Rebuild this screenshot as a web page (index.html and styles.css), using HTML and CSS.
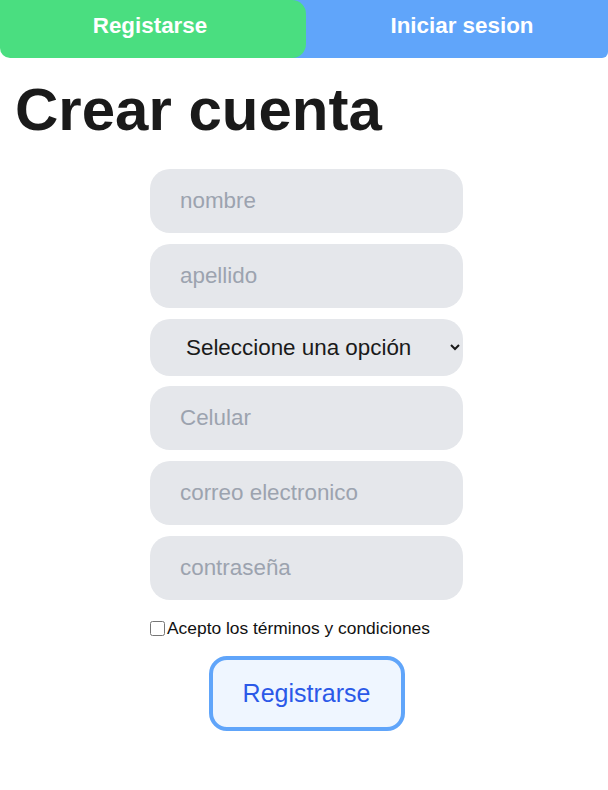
FILE: index.html
```html
<!DOCTYPE html>
<html lang="es">
<head>
<meta charset="utf-8">
<link rel="stylesheet" href="styles.css">
<title>Crear cuenta</title>
</head>
<body>
<div class="tabs">
  <button class="tab tab-register">Registarse</button>
  <button class="tab tab-login">Iniciar sesion</button>
</div>
<h1 class="title">Crear cuenta</h1>
<form class="form">
  <input class="field" type="text" placeholder="nombre">
  <input class="field" type="text" placeholder="apellido">
  <select class="field select">
    <option>Seleccione una opción</option>
  </select>
  <input class="field" type="text" placeholder="Celular">
  <input class="field" type="email" placeholder="correo electronico">
  <input class="field" type="password" placeholder="contraseña">
  <label class="terms"><input class="check" type="checkbox">Acepto los términos y condiciones</label>
  <button class="submit" type="button">Registrarse</button>
</form>
</body>
</html>
```

FILE: styles.css
```css
* { box-sizing: border-box; }
body {
  margin: 0;
  font-family: "Liberation Sans", Arial, sans-serif;
  background: #fff;
  width: 608px;
  overflow: hidden;
}
.tabs {
  display: flex;
  height: 58px;
}
.tab {
  border: none;
  font-family: inherit;
  font-weight: 700;
  font-size: 22.4px;
  color: #fff;
  height: 58px;
  padding: 0 0 6px 0;
}
.tab-register {
  position: relative;
  z-index: 1;
  width: 306px;
  padding-right: 6px;
  background: #4ade80;
  border-radius: 0 14px 14px 10px;
}
.tab-login {
  flex: 1;
  margin-left: -14px;
  padding-left: 24px;
  background: #60a5fa;
  border-radius: 0 0 6px 0;
}
.title {
  margin: 17px 0 0 15px;
  font-size: 60px;
  line-height: 70px;
  font-weight: 700;
  color: #1a1a1a;
}
.form {
  width: 313px;
  margin: 24px 0 0 150px;
  display: flex;
  flex-direction: column;
}
.field {
  height: 64px;
  border: none;
  border-radius: 20px;
  background: #e5e7eb;
  padding: 0 30px;
  font-family: inherit;
  font-size: 22.4px;
  color: #1a1a1a;
  margin-bottom: 11px;
  outline: none;
}
.field::placeholder { color: #9ca3af; }
.select {
  height: 57px;
  margin-bottom: 10px;
  padding: 0 8px 0 32px;
}
.terms {
  display: flex;
  align-items: center;
  margin-top: 7px;
  font-size: 17.4px;
  color: #111;
  line-height: 20px;
}
.check {
  margin: 0 2px 0 0;
  width: 15px;
  height: 15px;
}
.submit {
  align-self: center;
  margin-top: 18px;
  width: 196px;
  height: 75px;
  border: 4px solid #60a5fa;
  border-radius: 18px;
  background: #eff6ff;
  color: #2b59e8;
  font-family: inherit;
  font-size: 25px;
}
```
